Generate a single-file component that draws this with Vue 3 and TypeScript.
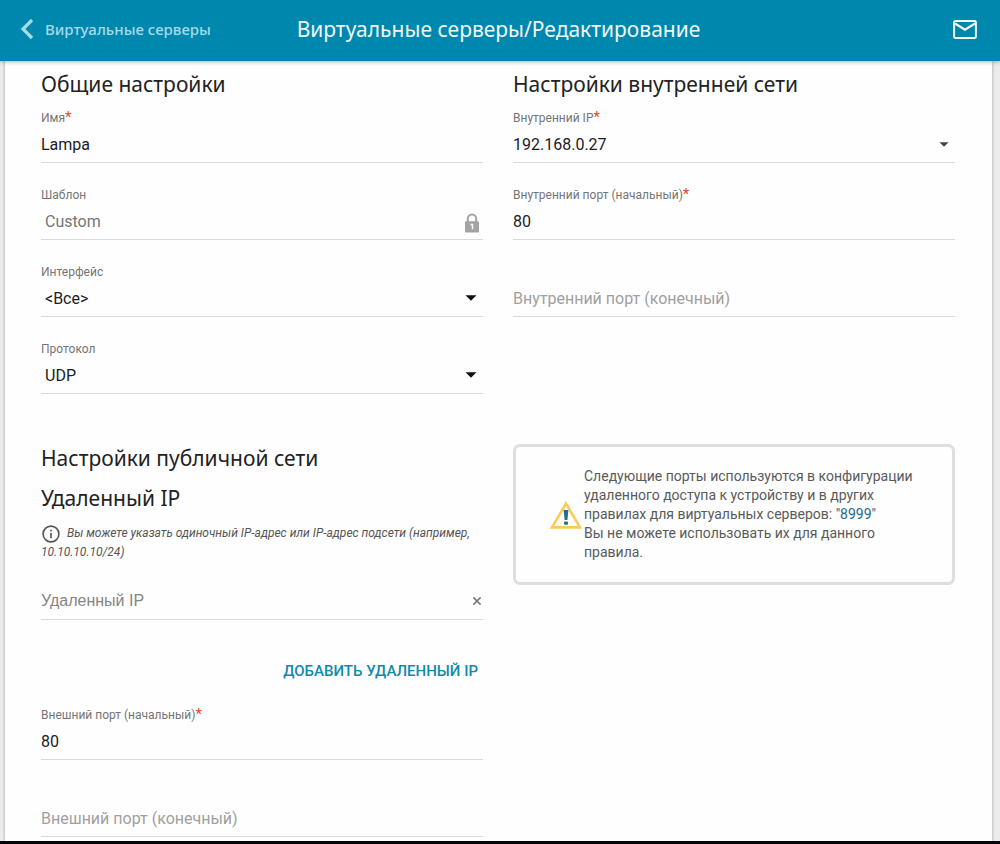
<script setup lang="ts">
import { reactive } from 'vue'

interface Field {
  id: string
  label: string
  value: string
  kind: 'text' | 'select'
  required?: boolean
  indented?: boolean
  locked?: boolean
  smallArrow?: boolean
  options?: string[]
}

const general = reactive<Field[]>([
  { id: 'name', label: 'Имя', value: 'Lampa', kind: 'text', required: true },
  { id: 'template', label: 'Шаблон', value: 'Custom', kind: 'text', indented: true, locked: true },
  { id: 'iface', label: 'Интерфейс', value: '<Все>', kind: 'select', indented: true, options: ['<Все>'] },
  { id: 'protocol', label: 'Протокол', value: 'UDP', kind: 'select', indented: true, options: ['UDP', 'TCP', 'TCP/UDP'] },
])

const internal = reactive<Field[]>([
  { id: 'int-ip', label: 'Внутренний IP', value: '192.168.0.27', kind: 'select', required: true, smallArrow: true, options: ['192.168.0.27'] },
  { id: 'int-start', label: 'Внутренний порт (начальный)', value: '80', kind: 'text', required: true },
  { id: 'int-end', label: 'Внутренний порт (конечный)', value: '', kind: 'text' },
])

const external = reactive<Field[]>([
  { id: 'ext-start', label: 'Внешний порт (начальный)', value: '80', kind: 'text', required: true },
  { id: 'ext-end', label: 'Внешний порт (конечный)', value: '', kind: 'text' },
])

const remote = reactive<{ ips: string[] }>({ ips: [''] })
</script>

<template>
  <div class="page">
    <header class="bar">
      <a class="back" href="#servers">
        <svg width="14" height="22" viewBox="0 0 14 22" aria-hidden="true">
          <path d="M12 2 L3 11 L12 20" fill="none" stroke="currentColor" stroke-width="3.2" />
        </svg>
        <span>Виртуальные серверы</span>
      </a>
      <h1>Виртуальные серверы/Редактирование</h1>
      <button class="mail" type="button" aria-label="Сообщения">
        <svg width="24" height="19" viewBox="0 0 24 19" aria-hidden="true">
          <rect x="1.1" y="1.1" width="21.8" height="16.8" rx="1.2" fill="none" stroke="currentColor" stroke-width="2" />
          <path d="M2 3.5 L12 9.8 L22 3.5" fill="none" stroke="currentColor" stroke-width="2.2" />
        </svg>
      </button>
    </header>

    <main class="card">
      <section
        v-for="group in [{ title: 'Общие настройки', fields: general }, { title: 'Настройки внутренней сети', fields: internal }]"
        :key="group.title"
      >
        <h2>{{ group.title }}</h2>
        <div v-for="f in group.fields" :key="f.id" class="field">
          <label :for="f.id">{{ f.value ? f.label : '' }}<sup v-if="f.required">*</sup></label>
          <div class="control" :class="{ indented: f.indented }">
            <select v-if="f.kind === 'select'" :id="f.id" v-model="f.value">
              <option v-for="o in f.options" :key="o">{{ o }}</option>
            </select>
            <input v-else :id="f.id" v-model="f.value" type="text" :placeholder="f.label" :aria-label="f.label" :disabled="f.locked" />
            <svg v-if="f.kind === 'select'" class="arrow" :class="{ small: f.smallArrow }" viewBox="0 0 12 6" aria-hidden="true">
              <path d="M0.5 0.3 H11.5 L6 5.8 Z" fill="currentColor" />
            </svg>
            <svg v-if="f.locked" class="lock" width="14" height="20" viewBox="0 0 14 20" aria-hidden="true">
              <path d="M2.8 9 V5.8 a4.2 4.2 0 0 1 8.4 0 V9" fill="none" stroke="#a3a3a3" stroke-width="2" />
              <rect x="0" y="8.2" width="14" height="11.3" rx="1" fill="#a3a3a3" />
              <path d="M5.4 11.6 H7.5 V16.2" fill="none" stroke="#f4f4f4" stroke-width="1.5" />
            </svg>
          </div>
        </div>
      </section>

      <section>
        <h2>Настройки публичной сети</h2>
        <h2>Удаленный IP</h2>
        <p class="hint">
          <svg width="18" height="18" viewBox="0 0 18 18" aria-hidden="true">
            <circle cx="9" cy="9" r="7.9" fill="none" stroke="#555" stroke-width="1.6" />
            <path d="M9 8 V13.2 M9 4.8 V6.6" stroke="#555" stroke-width="1.7" />
          </svg>
          Вы можете указать одиночный IP-адрес или IP-адрес подсети (например, 10.10.10.10/24)
        </p>
        <div v-for="(_, i) in remote.ips" :key="i" class="control remote">
          <input v-model="remote.ips[i]" type="text" placeholder="Удаленный IP" aria-label="Удаленный IP" />
          <button class="clear" type="button" aria-label="Удалить" @click="remote.ips[i] = ''">
            <svg width="10" height="10" viewBox="0 0 10 10" aria-hidden="true">
              <path d="M1.4 1.4 L8.6 8.6 M8.6 1.4 L1.4 8.6" stroke="#777" stroke-width="1.5" />
            </svg>
          </button>
        </div>
        <div class="actions">
          <button class="add" type="button" @click="remote.ips.push('')">ДОБАВИТЬ УДАЛЕННЫЙ IP</button>
        </div>
        <div v-for="f in external" :key="f.id" class="field">
          <label :for="f.id">{{ f.value ? f.label : '' }}<sup v-if="f.required">*</sup></label>
          <div class="control">
            <input :id="f.id" v-model="f.value" type="text" :placeholder="f.label" :aria-label="f.label" />
          </div>
        </div>
      </section>

      <aside class="notice">
        <svg width="32" height="28" viewBox="0 0 32 28" aria-hidden="true">
          <path d="M16 2.6 L30 26.4 H2 Z" fill="#fff" stroke="#fbcb57" stroke-width="2.6" />
          <path d="M13.6 9 H18.4 L17.4 19 H14.6 Z" fill="#256d92" />
          <rect x="14" y="20.5" width="4" height="3.2" rx="1" fill="#256d92" />
        </svg>
        <p>
          Следующие порты используются в конфигурации удаленного доступа к устройству и в других правилах для виртуальных
          серверов: <span class="port">"8999"</span><br />Вы не можете использовать их для данного правила.
        </p>
      </aside>
    </main>
  </div>
</template>

<style>
body {
  margin: 0;
}
</style>

<style scoped>
.page {
  box-sizing: border-box;
  display: flex;
  flex-direction: column;
  min-height: 100vh;
  padding: 0 8px 0 5px;
  border-bottom: 3px solid #05060c;
  background: #ececec;
  color: #222;
  font-family: 'Noto Sans', 'Open Sans', sans-serif;
}

.bar {
  position: relative;
  display: grid;
  grid-template-columns: 1fr auto 1fr;
  align-items: center;
  height: 61px;
  margin: 0 -8px 0 -5px;
  padding: 0 23px 3px 20px;
  box-sizing: border-box;
  background: #0087ad;
  color: #f0f9fc;
  box-shadow: 0 1px 4px rgba(0, 0, 0, 0.3);
}

.back {
  display: flex;
  align-items: center;
  gap: 11px;
  color: #a6dbe9;
  font-size: 15px;
  font-weight: 500;
  text-decoration: none;
  white-space: nowrap;
}

h1 {
  margin: 0;
  font-size: 21px;
  font-weight: 400;
}

button {
  padding: 0;
  border: 0;
  background: none;
  color: inherit;
}

.mail {
  display: flex;
  justify-self: end;
}

.card {
  display: grid;
  grid-template-columns: 1fr 1fr;
  grid-template-rows: auto auto;
  align-content: start;
  column-gap: 30px;
  row-gap: 26px;
  flex: 1;
  padding: 9px 37px 2px 36px;
  background: #fefefe;
  box-shadow: 0 0 3px rgba(0, 0, 0, 0.35);
}

h2 {
  margin: 0 0 12px;
  font-size: 21px;
  font-weight: 400;
  line-height: 28px;
}

.field {
  margin-bottom: 24px;
}

section:last-of-type .field:last-child {
  margin-bottom: 0;
}

label {
  display: block;
  height: 16px;
  color: #757575;
  font-family: Roboto, sans-serif;
  font-size: 12px;
  line-height: 16px;
}

sup {
  color: #e8452f;
  font-size: 15px;
  line-height: 0;
  vertical-align: baseline;
}

.control {
  display: grid;
  align-items: center;
  height: 36px;
  border-bottom: 1px solid #dadada;
}

.control > * {
  grid-area: 1 / 1;
}

input,
select {
  width: 100%;
  height: 36px;
  padding: 0;
  border: 0;
  outline: 0;
  appearance: none;
  background: transparent;
  color: #1c1c1c;
  font: 16px Roboto, sans-serif;
}

.indented input,
.indented select {
  padding-left: 4px;
}

input:disabled {
  color: #757575;
}

input::placeholder {
  color: #a0a0a0;
  opacity: 1;
}

.arrow {
  justify-self: end;
  width: 12px;
  height: 6px;
  margin-right: 6px;
  color: #111;
  pointer-events: none;
}

.arrow.small {
  width: 10px;
  height: 5px;
  color: #444;
}

.lock {
  align-self: end;
  justify-self: end;
  margin: 0 4px 6px 0;
}

.hint {
  margin: 0;
  color: #555;
  font-family: Roboto, sans-serif;
  font-size: 12px;
  font-style: italic;
  line-height: 19px;
}

.hint svg {
  margin: 0 4px 0 1px;
  vertical-align: middle;
}

.remote {
  margin-top: 21px;
}

.remote input {
  font-family: 'Liberation Sans', sans-serif;
}

.remote input::placeholder {
  color: #858585;
}

.clear {
  display: flex;
  justify-self: end;
  margin-right: 1px;
}

.actions {
  display: flex;
  justify-content: flex-end;
  padding: 33px 5px 18px 0;
}

.add {
  height: 36px;
  color: #1189ad;
  font: 500 15px Roboto, sans-serif;
}

.notice {
  display: flex;
  align-items: center;
  align-self: start;
  gap: 2px;
  padding: 20px 34px;
  border: 3px solid #dedede;
  border-radius: 7px;
}

.notice svg {
  flex: none;
}

.notice p {
  margin: 0;
  color: #5a5a5a;
  font-family: Roboto, sans-serif;
  font-size: 14px;
  line-height: 19px;
}

.port {
  color: #1f678c;
}
</style>
